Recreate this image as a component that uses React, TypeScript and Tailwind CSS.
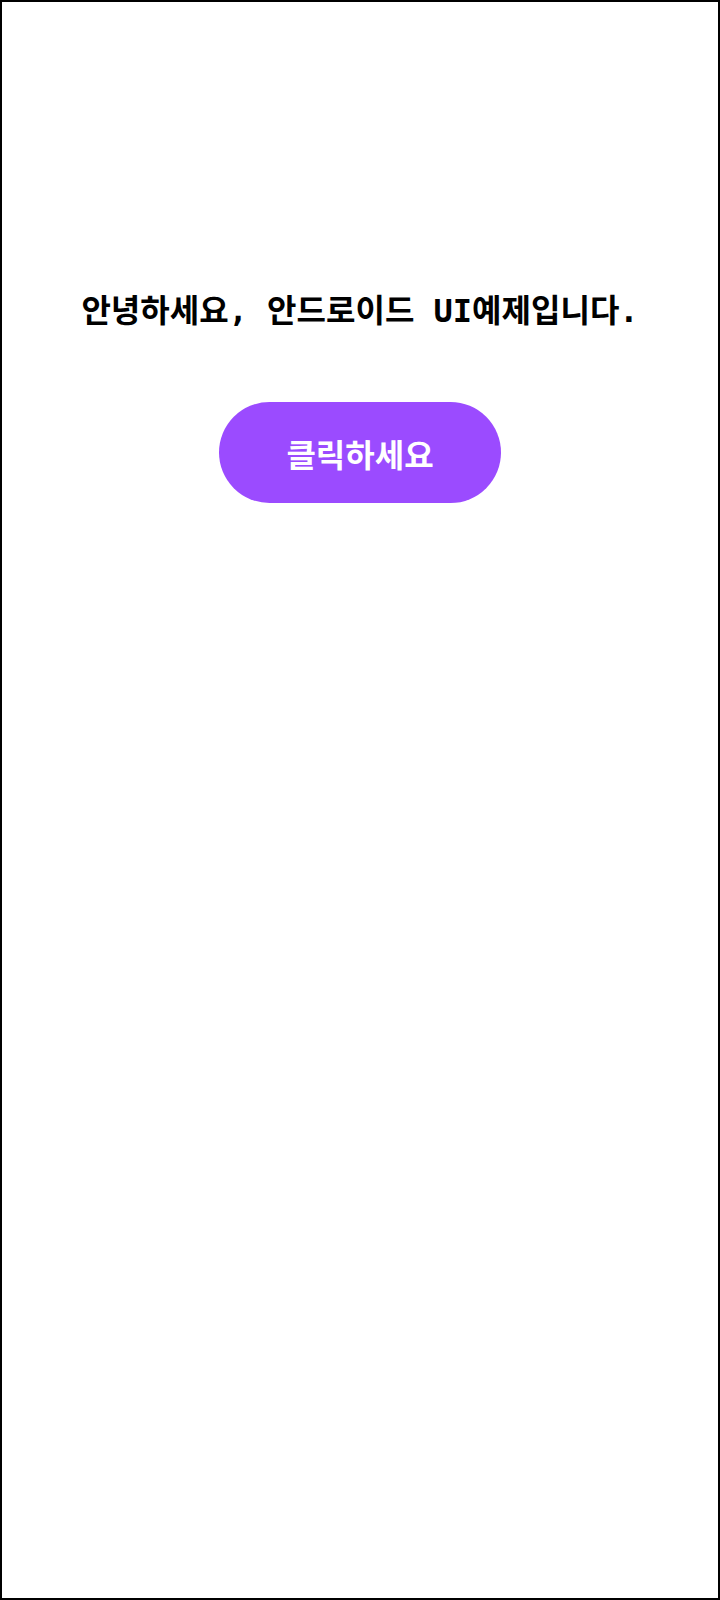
export default function App() {
  return (
    <div className="flex h-[1600px] w-[720px] flex-col items-center border-2 border-black bg-white pt-[289px]">
      <h1 className="font-['DejaVu_Sans_Mono','Noto_Sans_CJK_KR',monospace] text-[32px] font-bold leading-[40px] text-black">
        안녕하세요, 안드로이드 UI예제입니다.
      </h1>
      <button className="mt-[71px] flex h-[101px] w-[282px] items-center justify-center rounded-full bg-[#9b4bff] font-['Noto_Sans_CJK_KR','Noto_Sans',sans-serif] text-[32px] font-bold text-white">
        클릭하세요
      </button>
    </div>
  );
}
